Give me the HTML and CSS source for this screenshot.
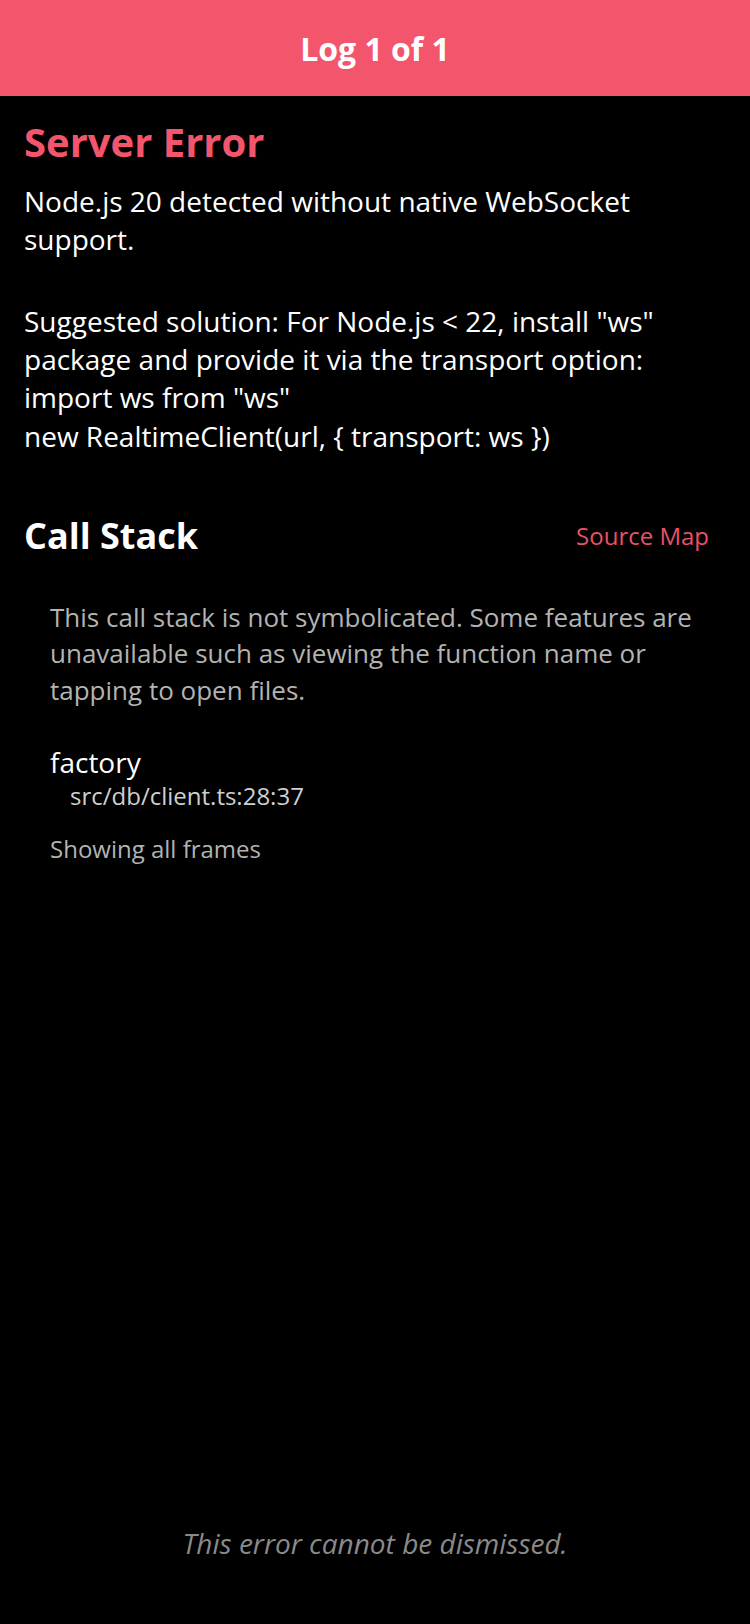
FILE: index.html
```html
<!DOCTYPE html>
<html lang="en">
<head>
  <meta charset="UTF-8">
  <title>Log 1 of 1</title>
  <link rel="stylesheet" href="styles.css">
</head>
<body>

  <div class="header">Log 1 of 1</div>

  <div class="content">
    <h1 class="title">Server Error</h1>
    <p class="message">Node.js 20 detected without native WebSocket support.</p>
    <p class="message message-next">Suggested solution: For Node.js &lt; 22, install "ws" package and provide it via the transport option:<br>import ws from "ws"<br>new RealtimeClient(url, { transport: ws })</p>

    <div class="stack-head">
      <h2 class="stack-title">Call Stack</h2>
      <span class="source-map">Source Map</span>
    </div>

    <div class="stack">
      <p class="stack-note">This call stack is not symbolicated. Some features are unavailable such as viewing the function name or tapping to open files.</p>
      <div class="frame">
        <div class="frame-name">factory</div>
        <div class="frame-file">src/db/client.ts:28:37</div>
      </div>
      <div class="frames-info">Showing all frames</div>
    </div>
  </div>

  <div class="footer">This error cannot be dismissed.</div>

</body>
</html>
```

FILE: styles.css
```css
body {
  margin: 0;
  height: 1624px;
  background: #000;
  color: #fff;
  font-family: "Open Sans", "Noto Sans", sans-serif;
  display: flex;
  flex-direction: column;
}

.header {
  height: 96px;
  background: rgb(243, 86, 108);
  display: flex;
  justify-content: center;
  align-items: center;
  font-size: 32px;
  font-weight: 700;
}

.content {
  padding: 0 24px;
}

.title {
  margin: 21.5px 0 0;
  font-size: 40px;
  line-height: 48px;
  font-weight: 700;
  color: rgb(243, 86, 108);
}

.message {
  margin: 16.2px 0 0;
  font-size: 28px;
  line-height: 38.3px;
}

.message-next {
  margin-top: 43.4px;
}

.stack-head {
  display: flex;
  justify-content: space-between;
  align-items: center;
  margin-top: 58px;
  padding-right: 17px;
}

.stack-title {
  margin: 0;
  font-size: 36px;
  line-height: 46px;
  font-weight: 700;
}

.source-map {
  font-size: 24px;
  color: rgb(230, 82, 104);
}

.stack {
  padding: 0 12px 0 26px;
}

.stack-note {
  margin: 40px 0 0;
  font-size: 26px;
  line-height: 36.5px;
  color: #b3b3b3;
}

.frame {
  margin-top: 36.4px;
}

.frame-name {
  font-size: 28px;
  line-height: 35px;
}

.frame-file {
  padding-left: 20px;
  font-size: 24px;
  line-height: 32px;
  color: #cfcfcf;
}

.frames-info {
  margin-top: 21.6px;
  font-size: 24px;
  line-height: 32px;
  color: #b3b3b3;
}

.footer {
  margin-top: auto;
  margin-bottom: 62px;
  text-align: center;
  font-size: 28px;
  font-style: italic;
  color: #8a8a8a;
}
```
